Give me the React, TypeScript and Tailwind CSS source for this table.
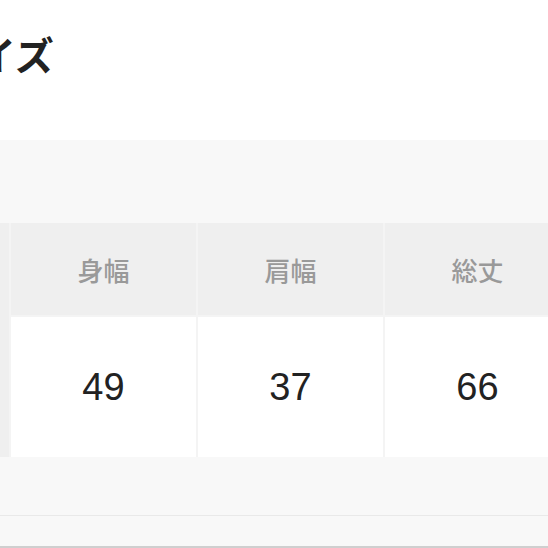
import React from "react";

const jp = { fontFamily: '"Noto Sans CJK JP", "Noto Sans", sans-serif' };

export default function App() {
  const headers = ["身幅", "肩幅", "総丈"];
  const values = ["49", "37", "66"];
  return (
    <div className="w-[548px] h-[548px] overflow-hidden bg-white flex flex-col">
      <div className="h-[140px] shrink-0 flex items-start pt-[27px]">
        <h1
          className="ml-[-62px] text-[39px] leading-[52px] font-bold text-[#222] whitespace-nowrap"
          style={jp}
        >
          サイズ
        </h1>
      </div>
      <div className="bg-[#f8f8f8] h-[376px] shrink-0 pt-[83px] border-b border-[#e9e9e9]">
        <div className="ml-[-176px] grid grid-cols-[185px_185px_185px_185px] grid-rows-[92px_140px] gap-[2px] bg-[#f4f4f4] w-max">
          <div className="bg-[#efefef] row-span-2" />
          {headers.map((h) => (
            <div
              key={h}
              className="bg-[#efefef] flex items-center justify-center text-[26px] font-medium text-[#999]"
              style={jp}
            >
              {h}
            </div>
          ))}
          {values.map((v) => (
            <div
              key={v}
              className="bg-white flex items-center justify-center text-[38px] text-[#222]"
              style={{ fontFamily: '"Liberation Sans", Arial, sans-serif' }}
            >
              {v}
            </div>
          ))}
        </div>
      </div>
      <div className="flex-1 bg-[#f8f8f8] border-b-2 border-[#cfcfcf]" />
    </div>
  );
}
